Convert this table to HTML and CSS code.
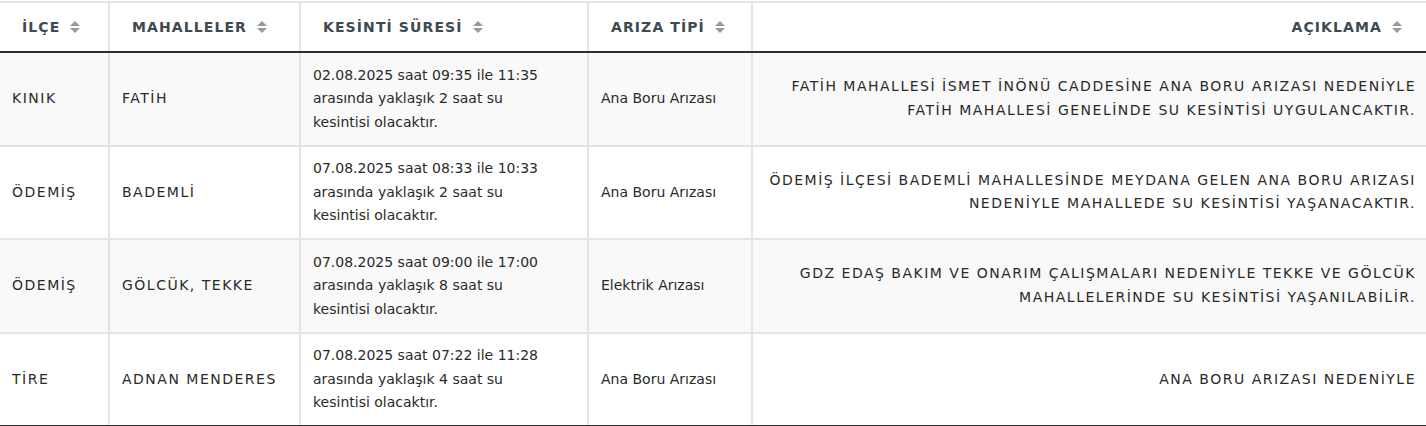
FILE: index.html
```html
<!DOCTYPE html>
<html lang="tr">
<head>
<meta charset="utf-8">
<title>Su Kesintileri</title>
<link rel="stylesheet" href="styles.css">
</head>
<body>
<table class="outages">
  <colgroup>
    <col class="c-ilce">
    <col class="c-mah">
    <col class="c-sure">
    <col class="c-tip">
    <col class="c-acik">
  </colgroup>
  <thead>
    <tr>
      <th><span class="th-in">İLÇE<span class="sort"></span></span></th>
      <th><span class="th-in">MAHALLELER<span class="sort"></span></span></th>
      <th><span class="th-in">KESİNTİ SÜRESİ<span class="sort"></span></span></th>
      <th><span class="th-in">ARIZA TİPİ<span class="sort"></span></span></th>
      <th class="right"><span class="th-in">AÇIKLAMA<span class="sort"></span></span></th>
    </tr>
  </thead>
  <tbody>
    <tr>
      <td class="caps">KINIK</td>
      <td class="caps">FATİH</td>
      <td>02.08.2025 saat 09:35 ile 11:35<br>arasında yaklaşık 2 saat su<br>kesintisi olacaktır.</td>
      <td>Ana Boru Arızası</td>
      <td class="caps right">FATİH MAHALLESİ İSMET İNÖNÜ CADDESİNE ANA BORU ARIZASI NEDENİYLE<br>FATİH MAHALLESİ GENELİNDE SU KESİNTİSİ UYGULANCAKTIR.</td>
    </tr>
    <tr>
      <td class="caps">ÖDEMİŞ</td>
      <td class="caps">BADEMLİ</td>
      <td>07.08.2025 saat 08:33 ile 10:33<br>arasında yaklaşık 2 saat su<br>kesintisi olacaktır.</td>
      <td>Ana Boru Arızası</td>
      <td class="caps right">ÖDEMİŞ İLÇESİ BADEMLİ MAHALLESİNDE MEYDANA GELEN ANA BORU ARIZASI<br>NEDENİYLE MAHALLEDE SU KESİNTİSİ YAŞANACAKTIR.</td>
    </tr>
    <tr>
      <td class="caps">ÖDEMİŞ</td>
      <td class="caps">GÖLCÜK, TEKKE</td>
      <td>07.08.2025 saat 09:00 ile 17:00<br>arasında yaklaşık 8 saat su<br>kesintisi olacaktır.</td>
      <td>Elektrik Arızası</td>
      <td class="caps right">GDZ EDAŞ BAKIM VE ONARIM ÇALIŞMALARI NEDENİYLE TEKKE VE GÖLCÜK<br>MAHALLELERİNDE SU KESİNTİSİ YAŞANILABİLİR.</td>
    </tr>
    <tr>
      <td class="caps">TİRE</td>
      <td class="caps">ADNAN MENDERES</td>
      <td>07.08.2025 saat 07:22 ile 11:28<br>arasında yaklaşık 4 saat su<br>kesintisi olacaktır.</td>
      <td>Ana Boru Arızası</td>
      <td class="caps right">ANA BORU ARIZASI NEDENİYLE</td>
    </tr>
  </tbody>
</table>
</body>
</html>
```

FILE: styles.css
```css
html, body {
  margin: 0;
  padding: 0;
  background: #ffffff;
}
body {
  font-family: "DejaVu Sans", "Noto Sans", sans-serif;
  color: #2a2a2a;
  padding-top: 1px;
}
.outages {
  width: 1426px;
  border-collapse: collapse;
  table-layout: fixed;
  font-size: 14px;
}
.c-ilce { width: 109px; }
.c-mah { width: 191px; }
.c-sure { width: 288px; }
.c-tip { width: 164px; }
.outages th,
.outages td {
  border: 2px solid #e3e4e6;
}
.outages tr > :first-child { border-left: none; }
.outages tr > :last-child { border-right: none; }
.outages thead th {
  border-bottom: 2px solid #2b2f33;
  padding: 14px 22px 14px 22px;
  height: 20px;
  text-align: left;
  font-weight: bold;
  color: #3e4a52;
  font-size: 14px;
  line-height: 20px;
  letter-spacing: 1.1px;
  white-space: nowrap;
}
.outages thead th.right { text-align: right; padding-right: 24px; }
.th-in {
  display: inline-flex;
  align-items: center;
  gap: 10px;
}
.sort {
  display: inline-flex;
  flex-direction: column;
  gap: 2px;
}
.sort::before,
.sort::after {
  content: "";
  width: 0;
  height: 0;
  border-left: 5px solid transparent;
  border-right: 5px solid transparent;
}
.sort::before { border-bottom: 5px solid #9a9a9a; }
.sort::after { border-top: 5px solid #9a9a9a; }
.outages tbody td {
  padding: 10.5px 12px;
  line-height: 23.5px;
  vertical-align: middle;
  font-size: 14px;
}
.outages tbody td.caps { letter-spacing: 1.5px; }
.outages tbody tr:nth-child(odd) td { background: #f9f9f9; }
.outages tbody tr:last-child td { border-bottom: 2px solid #2b2f33; }
.outages td.right { text-align: right; padding-right: 10px; }
```
